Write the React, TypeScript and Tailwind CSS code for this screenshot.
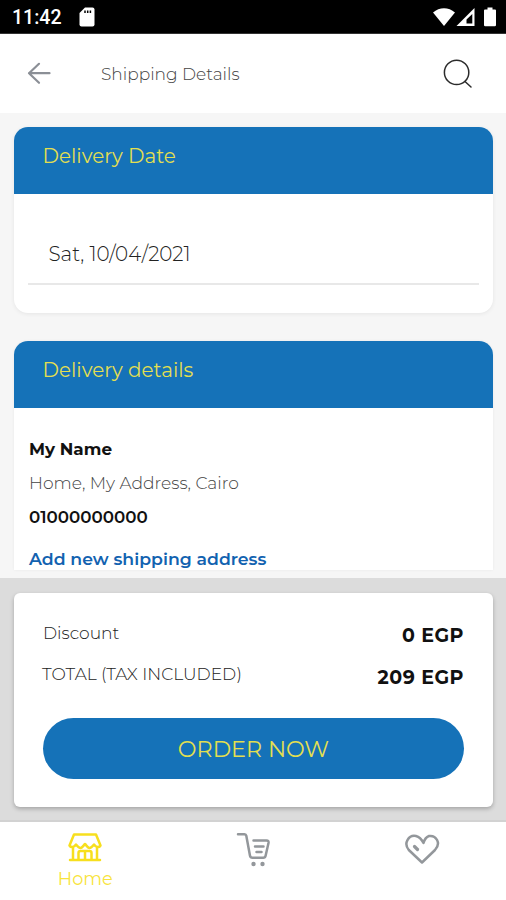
import type { ReactNode } from "react";

const BackIcon = () => (
  <svg className="h-6 w-6" viewBox="0 0 24 24" fill="none" stroke="#8b8f96" strokeWidth="2.200" strokeLinecap="round" strokeLinejoin="round">
    <path d="M22.500 11.200H2M12 1.800 2 11.200 12 20.800" />
  </svg>
);

const SearchIcon = () => (
  <svg className="h-8 w-8" viewBox="0 0 32 32" fill="none" stroke="#2b2b2b" strokeWidth="1.500" strokeLinecap="round">
    <circle cx="14.600" cy="14.400" r="12.200" />
    <path d="m23 23.500 6 5.500" />
  </svg>
);

const StatusBar = () => {
  return (
    <div className="h-[34px] shrink-0 bg-black border-b border-[#333] flex items-center justify-between pl-3 pr-2.5 text-white">
      <div className="flex items-center gap-[17px]">
        <span className="w-[50px] font-[Roboto] text-[19.500px] leading-5 font-medium pt-[3px] whitespace-nowrap">11:42</span>
        <svg className="w-4 h-5" viewBox="0 0 16 20">
          <path d="M6 .5h7.500a2 2 0 0 1 2 2v15a2 2 0 0 1-2 2h-11a2 2 0 0 1-2-2V6z" fill="#fff" />
          <path d="M6 3.500v2.500M8.700 3.500v2.500M11.400 3.500v2.500" stroke="#000" strokeWidth="1.500" />
        </svg>
      </div>
      <div className="flex items-center">
        <svg className="w-[22px] h-5" viewBox="0 0 22 20">
          <path d="M0 5.500C6.500-.3 15.500-.3 22 5.500L11 19z" fill="#fff" />
        </svg>
        <svg className="w-[19px] h-5 ml-px" viewBox="0 0 19 20">
          <path fillRule="evenodd" d="M18.500 1v18H.5zM16.300 7l-5.800 5.500v4h5.800z" fill="#fff" />
        </svg>
        <svg className="w-3 h-5 ml-[9px]" viewBox="0 0 12 20">
          <path d="M3.500.5h5v2H11q1 0 1 1V18q0 1.200-1.200 1.200H1.200Q0 19.200 0 18V3.500q0-1 1-1h2.500z" fill="#fff" />
        </svg>
      </div>
    </div>
  );
};

const Header = () => {
  return (
    <header className="h-[79px] shrink-0 bg-white flex items-center pl-[27px] pr-8">
      <BackIcon />
      <h1 className="ml-[50px] flex-1 text-[17px] font-light text-[#444] pt-[3px] whitespace-nowrap">Shipping Details</h1>
      <SearchIcon />
    </header>
  );
};

const CardTitle = ({ children }: { children: ReactNode }) => (
  <h2 className="h-[67px] rounded-t-[14px] bg-[#1572b8] pl-[28.500px] pt-[17px] text-[19.900px] leading-6 font-normal text-[#e3df50] whitespace-nowrap">
    {children}
  </h2>
);

const Details = () => {
  return (
    <main className="h-[465px] shrink-0 bg-[#f6f6f6] px-3.5 pt-3.5 pb-2 flex flex-col">
      <section className="h-[186px] mr-[-1px] shrink-0 rounded-[14px] bg-white shadow-[0_1px_4px_rgba(0,0,0,0.07)]">
        <CardTitle>Delivery Date</CardTitle>
        <div className="mx-3.5 h-[91px] border-b-2 border-[#e8e8e8] pl-[20.500px] pt-12 text-[19.900px] leading-6 font-light text-[#222] whitespace-nowrap">
          Sat, 10/04/2021
        </div>
      </section>
      <section className="mt-7 mr-[-1px] h-[229px] shrink-0 rounded-t-[14px] bg-white shadow-[0_0_3px_rgba(0,0,0,0.06)]">
        <CardTitle>Delivery details</CardTitle>
        <div className="pl-[15px] pt-[29px] text-[16.800px] leading-6 whitespace-nowrap">
          <p className="font-bold text-[#111]">My Name</p>
          <p className="mt-2.5 text-[17.100px] font-light text-[#444]">Home, My Address, Cairo</p>
          <p className="mt-2.5 text-[16.700px] font-semibold text-[#111]">01000000000</p>
          <a href="#" className="mt-[18px] block text-[17.300px] font-semibold text-[#1262b0]">Add new shipping address</a>
        </div>
      </section>
    </main>
  );
};

const Summary = () => {
  return (
    <section className="h-[244px] shrink-0 bg-[#dcdcdc] border-b-2 border-[#d2d2d2] pl-3.5 pr-[13px] pt-[15px]">
      <div className="h-[214px] rounded-md bg-white px-[29px] pt-[29px] shadow-[0_2px_4px_rgba(0,0,0,0.25)]">
        <div className="flex h-6 justify-between text-[17.100px] leading-6 font-light text-[#222] whitespace-nowrap">
          <span className="-mt-px">Discount</span>
          <b className="pt-0.5 text-[19px] font-bold tracking-[0.5px] text-[#111]">0 EGP</b>
        </div>
        <div className="mt-[18px] flex h-6 justify-between text-[17.100px] leading-6 font-light text-[#222] whitespace-nowrap">
          <span className="-ml-px -mt-0.5">TOTAL (TAX INCLUDED)</span>
          <b className="pt-0.5 text-[19px] font-bold tracking-[0.5px] text-[#111]">209 EGP</b>
        </div>
        <button className="mt-[30px] h-[61px] w-full rounded-full bg-[#1572b8] pt-0.5 text-[22.300px] font-normal text-[#e3df50]">
          ORDER NOW
        </button>
      </div>
    </section>
  );
};

const BottomNav = () => {
  return (
    <nav className="h-[78px] shrink-0 bg-white grid grid-cols-3 pt-2.5">
      <div className="flex flex-col items-center pl-0.5 text-[#f7df1e]">
        <svg className="w-[34px] h-8" viewBox="0 0 34 32" fill="none" stroke="currentColor" strokeWidth="2.500" strokeLinecap="round" strokeLinejoin="round">
          <path d="M6 2.500h22l4.500 11c-1.500 2.500-4.500 2-6.500-1-2 2.500-3 3.500-4.500 3.500S19 14 17 12c-2 2-3 4-4.500 4S10 15 8 12.500c-2 3-5 3.500-6.500 1z" />
          <path d="M5 16v11.500M29 16v11.500M2 28h30M10.500 27.500V21q0-2 2-2h9q2 0 2 2v6.500M17 20v7.500" />
        </svg>
        <span className="mt-[3px] text-[17.700px] leading-6 font-normal text-[#f8e43c]">Home</span>
      </div>
      <div className="flex justify-center pl-[3px]">
        <svg className="w-9 h-9" viewBox="0 0 36 36" fill="none" stroke="#93979b" strokeWidth="2.500" strokeLinecap="round" strokeLinejoin="round">
          <path d="M2 2.200h6.500q1.500 0 1.800 1.500l3.700 20q.4 2 2.400 2h10.800q2 0 2.400-2L32.500 11q.4-2.500-2-2.500H17.500M19 14.500h8.500M20.500 20h5" />
          <circle cx="17.500" cy="32" r="2.200" fill="#93979b" stroke="none" />
          <circle cx="26.500" cy="32" r="2.200" fill="#93979b" stroke="none" />
        </svg>
      </div>
      <div className="flex justify-center pl-px">
        <svg className="w-9 h-9" viewBox="0 0 36 36" fill="none" stroke="#93979b" strokeWidth="2.500" strokeLinecap="round" strokeLinejoin="round">
          <path d="M18 30.500 4.800 18C-1 11 5 2.500 12 4q4.500 1.200 7.500 7Q21 5.500 25 4c7-1 12.500 7 6 14z" />
          <path d="m10.500 14.500 3 3" strokeWidth="3.200" />
        </svg>
      </div>
    </nav>
  );
};

export default function App() {
  return (
    <div className="w-full max-w-[506px] h-[900px] overflow-hidden flex flex-col bg-white font-[Montserrat,Inter,sans-serif]">
      <StatusBar />
      <Header />
      <Details />
      <Summary />
      <BottomNav />
    </div>
  );
}
